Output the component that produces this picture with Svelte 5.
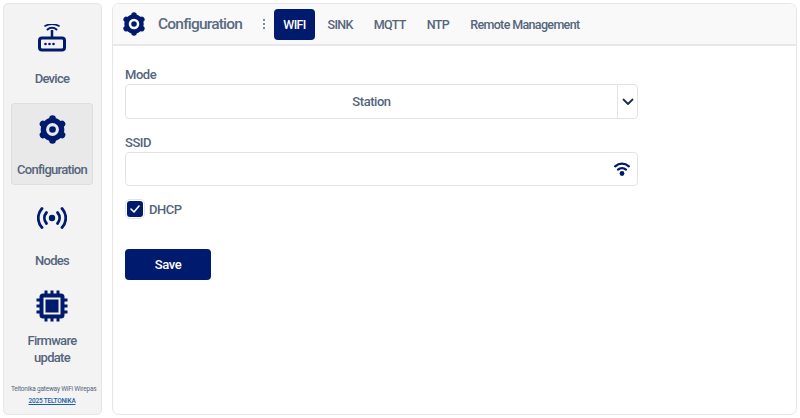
<script>
  const navItems = [
    { id: 'device', label: 'Device' },
    { id: 'config', label: 'Configuration', active: true },
    { id: 'nodes', label: 'Nodes' },
    { id: 'firmware', label: 'Firmware update' }
  ];
  const tabs = ['WIFI', 'SINK', 'MQTT', 'NTP', 'Remote Management'];
  const lobes = [0, 60, 120, 180, 240, 300];
  let dhcp = $state(true);
</script>

{#snippet gear(size, hole)}
  <svg width={size} height={size} viewBox="0 0 28 28">
    <circle cx="14" cy="14" r="11.400" fill="#001a6e"/>
    {#each lobes as a}
      <circle cx="14" cy="3.400" r="3.200" fill="#001a6e" transform="rotate({a} 14 14)"/>
    {/each}
    <circle cx="14" cy="14" r="6.200" fill={hole}/>
    <circle cx="14" cy="14" r="3.200" fill="#001a6e"/>
  </svg>
{/snippet}

{#snippet navIcon(id)}
  {#if id === 'device'}
    <svg width="28" height="28" viewBox="0 0 28 28" fill="none">
      <rect x="1.500" y="14" width="25" height="12" rx="2.500" stroke="#001a6e" stroke-width="3"/>
      <path d="M14 6v8" stroke="#001a6e" stroke-width="2.500"/>
      <path d="M9.500 5.500c2.500-2.300 6.500-2.300 9 0" stroke="#001a6e" stroke-width="2" stroke-linecap="round"/>
      <path d="M7 2c4-2.300 10-2.300 14 0" stroke="#001a6e" stroke-width="1.600" stroke-linecap="round"/>
      <circle cx="7.500" cy="20" r="1.300" fill="#001a6e"/>
      <circle cx="11.500" cy="20" r="1.300" fill="#001a6e"/>
      <circle cx="15.500" cy="20" r="1.300" fill="#001a6e"/>
    </svg>
  {:else if id === 'config'}
    {@render gear(29, '#e9e9e9')}
  {:else if id === 'nodes'}
    <svg width="30" height="22" viewBox="0 0 30 22" fill="none" stroke="#001a6e" stroke-width="2.800" stroke-linecap="round">
      <circle cx="15" cy="11" r="3.200" fill="#001a6e" stroke="none"/>
      <path d="M9.500 5.500c-2.800 3.300-2.800 7.700 0 11"/>
      <path d="M20.500 5.500c2.800 3.300 2.800 7.700 0 11"/>
      <path d="M5 1.500c-5 5.600-5 13.400 0 19"/>
      <path d="M25 1.500c5 5.600 5 13.400 0 19"/>
    </svg>
  {:else}
    <svg width="32" height="32" viewBox="0 0 32 32" fill="none">
      <rect x="3.500" y="3.500" width="25" height="25" rx="3.500" fill="#001a6e"/>
      <rect x="7.500" y="7.500" width="17" height="17" fill="#f3f3f3"/>
      <rect x="9.500" y="9.500" width="13" height="13" fill="#001a6e"/>
      <path d="M10 .5v4M16 .5v4M22 .5v4M10 27.500v4M16 27.500v4M22 27.500v4M.5 10h4M.5 16h4M.5 22h4M27.500 10h4M27.500 16h4M27.500 22h4" stroke="#001a6e" stroke-width="3"/>
    </svg>
  {/if}
{/snippet}

<div class="shell">
  <aside class="sidebar">
    <nav class="nav">
      {#each navItems as item}
        <a class="nav-item {item.id}" class:active={item.active} href="#{item.id}">
          <span class="nav-icon">{@render navIcon(item.id)}</span>
          <span class="nav-label">{item.label}</span>
        </a>
      {/each}
    </nav>
    <footer class="foot">
      <div>Teltonika gateway WiFi Wirepas</div>
      <a href="#teltonika">2025 TELTONIKA</a>
    </footer>
  </aside>

  <main class="panel">
    <header class="topbar">
      <span class="top-icon">{@render gear(24, '#f9f9f9')}</span>
      <h1>Configuration</h1>
      <svg class="dots" width="4" height="12" viewBox="0 0 4 12" fill="#5a6b80">
        <circle cx="2" cy="2" r="1"/><circle cx="2" cy="6" r="1"/><circle cx="2" cy="10" r="1"/>
      </svg>
      <div class="tabs">
        {#each tabs as tab, i}
          <button class="tab" class:current={i === 0}>{tab}</button>
        {/each}
      </div>
    </header>

    <form class="form" onsubmit={(e) => e.preventDefault()}>
      <label class="field-label" for="mode">Mode</label>
      <div class="select" id="mode">
        <span class="select-value">Station</span>
        <span class="select-arrow">
          <svg width="12" height="8" viewBox="0 0 12 8" fill="none" stroke="#1f2f47" stroke-width="1.800" stroke-linecap="round" stroke-linejoin="round"><path d="M1.500 1.500 6 6l4.500-4.500"/></svg>
        </span>
      </div>

      <label class="field-label ssid" for="ssid">SSID</label>
      <div class="input">
        <input id="ssid" type="text" />
        <svg width="16" height="14" viewBox="0 0 16 14" fill="none" stroke="#001a6e" stroke-width="2.300" stroke-linecap="round">
          <path d="M1.200 4.300c4-3.500 9.600-3.500 13.600 0"/>
          <path d="M4 7.600c2.300-1.900 5.700-1.900 8 0"/>
          <circle cx="8" cy="11.500" r="2.400" fill="#001a6e" stroke="none"/>
        </svg>
      </div>

      <label class="check">
        <input type="checkbox" bind:checked={dhcp} />
        <span class="box">
          <svg width="10" height="8" viewBox="0 0 10 8" fill="none" stroke="#fff" stroke-width="1.600" stroke-linecap="round" stroke-linejoin="round"><path d="M1 4l3 3 5-6"/></svg>
        </span>
        <span class="check-label">DHCP</span>
      </label>

      <button class="save" type="submit">Save</button>
    </form>
  </main>
</div>

<style>
  :global(body) {
    background: #fff;
    font-family: "Roboto", "Lato", sans-serif;
    letter-spacing: -0.45px;
  }

  .shell {
    display: flex;
    gap: 10px;
    height: 418px;
    box-sizing: border-box;
    padding: 3px;
  }

  .sidebar {
    width: 99px;
    box-sizing: border-box;
    flex-shrink: 0;
    display: flex;
    flex-direction: column;
    background: #f3f3f3;
    border: 1px solid #e6e6e6;
    border-radius: 5px;
    padding: 0 8px 0 7px;
  }

  .nav {
    display: flex;
    flex-direction: column;
    flex: 1;
  }

  .nav-item {
    display: flex;
    flex-direction: column;
    align-items: center;
    text-decoration: none;
    color: #55657c;
    font-size: 13px;
    font-weight: 500;
    letter-spacing: -0.7px;
    line-height: 17px;
    text-align: center;
    border: 1px solid transparent;
    border-radius: 3px;
    box-sizing: border-box;
  }

  .nav-icon {
    display: flex;
    align-items: center;
    justify-content: center;
    height: 32px;
  }

  .nav-item.device {
    padding-top: 17px;
    height: 99px;
  }

  .nav-item.device .nav-label {
    margin-top: 16px;
  }

  .nav-item.config {
    height: 82px;
    padding-top: 9px;
    background: #e9e9e9;
    border-color: #dedede;
  }

  .nav-item.config .nav-label {
    margin-top: 16px;
  }

  .nav-item.nodes {
    padding-top: 16px;
    height: 104px;
  }

  .nav-item.nodes .nav-label {
    margin-top: 18px;
  }

  .nav-item.firmware .nav-label {
    margin-top: 10px;
    width: 70px;
  }

  .foot {
    padding-bottom: 7px;
    text-align: center;
    font-size: 6.500px;
    line-height: 12px;
    letter-spacing: -0.2px;
    color: #55657c;
    white-space: nowrap;
  }

  .foot a {
    color: #1d5fa8;
    font-weight: 500;
  }

  .panel {
    flex: 1;
    background: #fff;
    border: 1px solid #e6e6e6;
    border-radius: 7px;
    overflow: hidden;
  }

  .topbar {
    height: 42px;
    box-sizing: border-box;
    display: flex;
    align-items: center;
    background: #f9f9f9;
    border-bottom: 2px solid #e8e8ec;
    padding-left: 9px;
  }

  .top-icon {
    display: flex;
    width: 24px;
  }

  h1 {
    margin: 0 0 0 12px;
    font-size: 15.500px;
    font-weight: 500;
    letter-spacing: -0.8px;
    color: #5a6b80;
    width: 104px;
  }

  .dots {
    margin-right: 8px;
  }

  .tabs {
    display: flex;
    align-items: center;
  }

  .tab {
    font: inherit;
    font-size: 12.500px;
    font-weight: 500;
    letter-spacing: -0.65px;
    color: #55657c;
    background: none;
    border: none;
    border-radius: 4px;
    height: 31px;
    padding: 0 10.500px;
  }

  .tab.current {
    background: #001a6e;
    color: #fff;
    width: 41px;
    padding: 0;
    margin-right: 2px;
  }

  .form {
    display: flex;
    flex-direction: column;
    align-items: flex-start;
    padding: 20px 0 0 12px;
    width: 513px;
  }

  .field-label {
    font-size: 13px;
    font-weight: 500;
    line-height: 17px;
    color: #55657c;
    margin-bottom: 1px;
  }

  .field-label.ssid {
    margin-top: 15px;
  }

  .select, .input {
    width: 100%;
    box-sizing: border-box;
    display: flex;
    align-items: center;
    border: 1px solid #e3e3e3;
    border-radius: 4px;
    background: #fff;
  }

  .select {
    height: 35px;
  }

  .select-value {
    flex: 1;
    text-align: center;
    font-size: 13px;
    font-weight: 500;
    color: #55657c;
  }

  .select-arrow {
    width: 19px;
    height: 100%;
    display: flex;
    align-items: center;
    justify-content: center;
    border-left: 1px solid #e3e3e3;
  }

  .input {
    height: 34px;
    padding-right: 7px;
  }

  .input input {
    flex: 1;
    min-width: 0;
    border: none;
    outline: none;
    background: none;
    font: inherit;
  }

  .check {
    display: flex;
    align-items: center;
    gap: 6px;
    margin-top: 15px;
  }

  .check input {
    display: none;
  }

  .box {
    width: 16px;
    height: 16px;
    display: flex;
    align-items: center;
    justify-content: center;
    background: #001a6e;
    border-radius: 3px;
    box-shadow: 0 0 0 1px #fff, 0 0 0 2px #e3e3e3;
    margin-left: 2px;
  }

  .check-label {
    font-size: 13px;
    font-weight: 500;
    color: #55657c;
  }

  .save {
    margin-top: 32px;
    width: 86px;
    height: 31px;
    font: inherit;
    font-size: 13px;
    font-weight: 500;
    letter-spacing: inherit;
    color: #fff;
    background: #001a6e;
    border: none;
    border-radius: 4px;
  }
</style>
